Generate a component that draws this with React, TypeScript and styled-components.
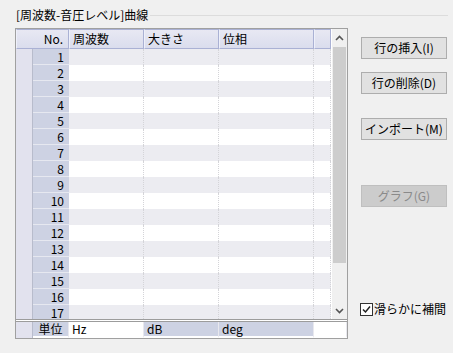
import styled, { createGlobalStyle } from 'styled-components'

const GlobalStyle = createGlobalStyle`
  html, body {
    margin: 0;
    padding: 0;
    background: #f0f0f0;
  }
  body {
    font-family: "Noto Sans CJK JP", "DejaVu Sans", sans-serif;
    font-size: 12px;
    color: #000;
  }
`

const Page = styled.div`
  width: 453px;
  height: 353px;
  display: flex;
  box-sizing: border-box;
  padding: 8px 0 0 15px;
  background: #f0f0f0;
`

const Group = styled.div`
  display: flex;
  flex-direction: column;
  width: 333px;
`

const TitleRow = styled.div`
  display: flex;
  align-items: center;
  height: 14px;
  gap: 2px;
`

const Title = styled.span`
  line-height: 14px;
  padding-left: 1px;
  white-space: nowrap;
`

const TitleLine = styled.div`
  flex: 1;
  height: 1px;
  background: #dcdcdc;
  margin-right: -100px;
`

const Grid = styled.div`
  margin-top: 6px;
  width: 333px;
  height: 311px;
  box-sizing: border-box;
  border: 1px solid #a0a0a0;
  background: #fff;
  display: flex;
  flex-direction: column;
`

const Upper = styled.div`
  display: flex;
  height: 290px;
  overflow: hidden;
`

const Sheet = styled.div`
  width: 315px;
  display: flex;
  flex-direction: column;
`

const HeaderRow = styled.div`
  display: flex;
  height: 20px;
  flex-shrink: 0;
`

const HeadCell = styled.div<{ $w: number; $right?: boolean }>`
  width: ${p => p.$w}px;
  box-sizing: border-box;
  height: 20px;
  background: linear-gradient(#e8e8f3, #dadded);
  border: 1px solid #aab1d4;
  border-left-color: #eef0fa;
  display: flex;
  align-items: center;
  justify-content: ${p => (p.$right ? 'flex-end' : 'flex-start')};
  padding: 0 5px 0 3px;
  line-height: 14px;
`

const Row = styled.div<{ $odd: boolean }>`
  display: flex;
  height: 16px;
  flex-shrink: 0;
  background: ${p => (p.$odd ? '#ececf1' : '#ffffff')};
`

const Indicator = styled.div`
  width: 17px;
  background: #e2e2ee;
  border-right: 1px solid #b8bccc;
  box-sizing: border-box;
`

const NumCell = styled.div`
  width: 36px;
  box-sizing: border-box;
  background: #cdd2e3;
  border-bottom: 1px solid #e6e8f0;
  display: flex;
  align-items: center;
  justify-content: flex-end;
  padding-right: 5px;
  line-height: 14px;
`

const Cell = styled.div<{ $w: number }>`
  width: ${p => p.$w}px;
  box-sizing: border-box;
  border-right: 1px dotted #d4d4d8;
`

const Scroll = styled.div`
  width: 16px;
  margin-left: 1px;
  display: flex;
  flex-direction: column;
  background: #f0f0f0;
`

const Arrow = styled.div`
  height: 17px;
  display: flex;
  align-items: center;
  justify-content: center;
`

const Thumb = styled.div`
  height: 216px;
  background: #cdcdcd;
  margin: 1px 1px 0 1px;
`

const Track = styled.div`
  flex: 1;
`

const Footer = styled.div`
  border-top: 3px double #9c9c9c;
  display: flex;
  height: 16px;
`

const FootCell = styled.div<{ $w: number; $shade?: boolean; $center?: boolean }>`
  width: ${p => p.$w}px;
  box-sizing: border-box;
  background: ${p => (p.$shade ? '#cdd2e3' : '#fff')};
  border-right: 1px solid #e8e8ee;
  border-bottom: 2px solid #fff;
  padding-left: ${p => (p.$center ? 0 : 3)}px;
  text-align: ${p => (p.$center ? 'center' : 'left')};
  font-size: 12px;
  line-height: 14px;
  white-space: nowrap;
`

const FootIndicator = styled.div`
  width: 17px;
  background: #e2e2ee;
  border-right: 1px solid #b8bccc;
  box-sizing: border-box;
`

const Side = styled.div`
  margin-left: 13px;
  margin-top: 29px;
  display: flex;
  flex-direction: column;
  width: 86px;
`

const Button = styled.button<{ $gap: number }>`
  width: 86px;
  height: 22px;
  margin-top: ${p => p.$gap}px;
  box-sizing: border-box;
  border: 1px solid #adadad;
  background: #e1e1e1;
  font-family: "Noto Sans CJK JP", sans-serif;
  font-size: 12px;
  color: #000;
  padding: 0;
  display: flex;
  align-items: center;
  justify-content: center;
  line-height: 14px;
  &:disabled {
    background: #cccccc;
    border-color: #bfbfbf;
    color: #8a8a8a;
  }
`

const Check = styled.label`
  margin-top: 95px;
  margin-left: -1px;
  display: flex;
  align-items: center;
  gap: 1px;
  white-space: nowrap;
  line-height: 14px;
`

const Box = styled.span`
  width: 13px;
  height: 13px;
  box-sizing: border-box;
  border: 1px solid #333;
  background: #fff;
  display: flex;
  align-items: center;
  justify-content: center;
`

const cols = [75, 75, 95, 17]
const rows = Array.from({ length: 17 }, (_, i) => i + 1)

export default function App() {
  return (
    <Page>
      <GlobalStyle />
      <Group>
        <TitleRow>
          <Title>[周波数-音圧レベル]曲線</Title>
          <TitleLine />
        </TitleRow>
        <Grid>
          <Upper>
            <Sheet>
              <HeaderRow>
                <HeadCell $w={53} $right>No.</HeadCell>
                <HeadCell $w={75}>周波数</HeadCell>
                <HeadCell $w={75}>大きさ</HeadCell>
                <HeadCell $w={95}>位相</HeadCell>
                <HeadCell $w={17} />
              </HeaderRow>
              {rows.map(n => (
                <Row key={n} $odd={n % 2 === 1}>
                  <Indicator />
                  <NumCell>{n}</NumCell>
                  {cols.map((w, i) => (
                    <Cell key={i} $w={w} />
                  ))}
                </Row>
              ))}
            </Sheet>
            <Scroll>
              <Arrow>
                <svg width="9" height="6" viewBox="0 0 9 6">
                  <path d="M1 5 L4.5 1.5 L8 5" fill="none" stroke="#555" strokeWidth="1.6" />
                </svg>
              </Arrow>
              <Thumb />
              <Track />
              <Arrow>
                <svg width="9" height="6" viewBox="0 0 9 6">
                  <path d="M1 1 L4.5 4.5 L8 1" fill="none" stroke="#555" strokeWidth="1.6" />
                </svg>
              </Arrow>
            </Scroll>
          </Upper>
          <Footer>
            <FootIndicator />
            <FootCell $w={36} $shade $center>単位</FootCell>
            <FootCell $w={75}>Hz</FootCell>
            <FootCell $w={75} $shade>dB</FootCell>
            <FootCell $w={95} $shade>deg</FootCell>
            <FootCell $w={33} />
          </Footer>
        </Grid>
      </Group>
      <Side>
        <Button $gap={0}>行の挿入(I)</Button>
        <Button $gap={13}>行の削除(D)</Button>
        <Button $gap={24}>インポート(M)</Button>
        <Button $gap={45} disabled>グラフ(G)</Button>
        <Check>
          <Box>
            <svg width="11" height="11" viewBox="0 0 11 11">
              <path d="M2 5.5 L4.5 8 L9 2.5" fill="none" stroke="#222" strokeWidth="1.5" />
            </svg>
          </Box>
          滑らかに補間
        </Check>
      </Side>
    </Page>
  )
}
